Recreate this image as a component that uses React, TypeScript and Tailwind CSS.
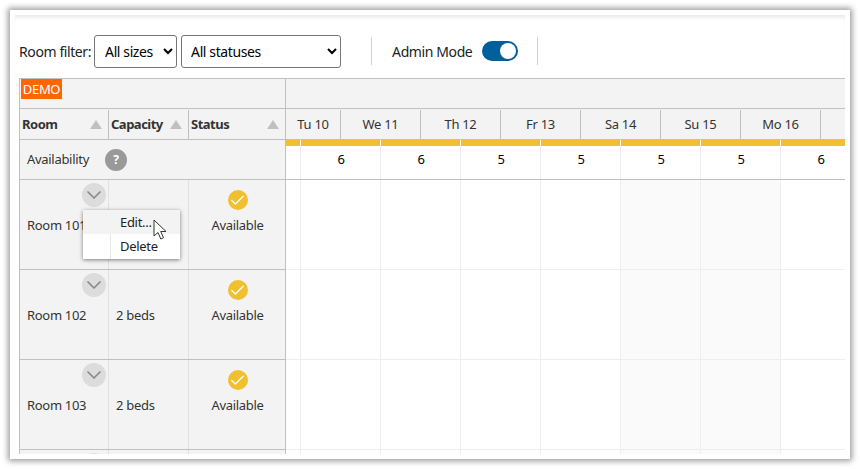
import { ChevronDown, Check } from 'lucide-react'

const days = ['Tu 10', 'We 11', 'Th 12', 'Fr 13', 'Sa 14', 'Su 15', 'Mo 16', '']
const counts = [6, 6, 5, 5, 5, 5, 6, null]
const rooms = ['Room 101', 'Room 102', 'Room 103', '']

function SortArrow() {
  return <span className="ml-auto h-0 w-0 border-x-[6px] border-b-[9px] border-x-transparent border-b-[#c0c0c0]" />
}

function RoomRow({ name }: { name: string }) {
  return (
    <div className="flex h-[90px] shrink-0 border-b border-[#c0c0c0]">
      <div className="relative flex w-[89px] shrink-0 items-center border-r border-[#e0e0e0] pl-[7px] pt-[3px]">
        {name}
        <div className="absolute left-[62px] top-[3px] flex h-6 w-6 items-center justify-center rounded-full bg-[#dcdcdc] text-[#8a8a8a]">
          <ChevronDown size={24} strokeWidth={1.75} />
        </div>
      </div>
      <div className="flex w-20 shrink-0 items-center border-r border-[#e0e0e0] pl-[7px] pt-[3px]">{name && '2 beds'}</div>
      {name && (
        <div className="flex flex-1 flex-col items-center pl-[1px] pt-[10px]">
          <div className="flex h-5 w-5 items-center justify-center rounded-full bg-[#f0c030] text-white">
            <Check size={17} strokeWidth={1.75} />
          </div>
          <div className="mt-[6px]">Available</div>
        </div>
      )}
    </div>
  )
}

function TimelineRow() {
  return (
    <div className="flex h-[90px] shrink-0 border-b border-[#eeeeee]">
      <div className="w-[15px] shrink-0 border-r border-[#eeeeee]" />
      {days.map((d, i) => (
        <div
          key={i}
          className={i === 4 || i === 5 ? 'w-20 shrink-0 border-r border-[#eeeeee] bg-[#fafafa]' : 'w-20 shrink-0 border-r border-[#eeeeee]'}
        />
      ))}
    </div>
  )
}

export default function App() {
  return (
    <div className="h-[469px] w-[860px] overflow-hidden bg-white p-[10px] pb-0 font-['Noto_Sans',sans-serif] text-[13px] tracking-[-0.3px] text-[#333333]">
      <div className="h-[449px] w-[840px] bg-white p-[5px] shadow-[0_0_6px_2px_rgba(0,0,0,0.4)]">
        <div className="flex h-[439px] flex-col overflow-hidden">
          {/* toolbar */}
          <div className="flex h-[63px] shrink-0 items-center pl-[4px] pt-[9px] text-[14px] tracking-[-0.4px] text-[#222222] shadow-[inset_0_4px_4px_-2px_rgba(0,0,0,0.1)]">
            <span>Room filter:</span>
            <select className="ml-[3px] h-[33px] w-[83px] rounded-[3px] border border-[#767676] bg-white pl-[6px] text-black">
              <option>All sizes</option>
            </select>
            <select className="ml-[4px] h-[33px] w-[160px] rounded-[3px] border border-[#767676] bg-white pl-[5px] text-black">
              <option>All statuses</option>
            </select>
            <div className="ml-[30px] h-7 w-px bg-[#d0d0d0]" />
            <span className="ml-[20px]">Admin Mode</span>
            <div className="ml-[10px] flex h-5 w-9 items-center justify-end rounded-full bg-[#00609c] pr-[2px]">
              <div className="h-4 w-4 rounded-full bg-white" />
            </div>
            <div className="ml-[19px] h-7 w-px bg-[#d0d0d0]" />
          </div>

          {/* scheduler */}
          <div className="relative ml-[4px] flex min-h-0 flex-1 border-t border-[#c0c0c0]">
            <div className="flex w-[267px] shrink-0 flex-col border-x border-[#c0c0c0] bg-[#f3f3f3]">
              <div className="h-[30px] shrink-0 border-b border-[#c0c0c0] pl-[1px]">
                <span className="inline-block h-5 w-[41px] bg-[#ff6600] text-center leading-5 text-white">DEMO</span>
              </div>
              <div className="flex h-[31px] shrink-0 border-b border-[#c0c0c0] pt-[1px] font-bold tracking-[-0.5px] text-[#333333]">
                <div className="flex w-[89px] shrink-0 items-center border-r border-[#c0c0c0] pl-[2px] pr-[6px]">Room<SortArrow /></div>
                <div className="flex w-20 shrink-0 items-center border-r border-[#c0c0c0] pl-[2px] pr-[6px]">Capacity<SortArrow /></div>
                <div className="flex flex-1 items-center pl-[2px] pr-[6px]">Status<SortArrow /></div>
              </div>
              <div className="flex h-10 shrink-0 items-center border-b border-[#c0c0c0] pl-[7px]">
                <span>Availability</span>
                <div className="ml-[16px] flex h-[22px] w-[22px] items-center justify-center rounded-full bg-[#999999] text-[12px] font-bold text-white">?</div>
              </div>
              {rooms.map((r, i) => <RoomRow key={i} name={r} />)}
            </div>

            <div className="flex min-w-0 flex-1 flex-col overflow-hidden">
              <div className="h-[30px] shrink-0 border-b border-[#c0c0c0] bg-[#f3f3f3]" />
              <div className="flex h-[31px] shrink-0 border-b border-[#c0c0c0] bg-[#f3f3f3] pt-[1px]">
                <div className="flex w-[55px] shrink-0 items-center justify-center border-r border-[#c0c0c0]">{days[0]}</div>
                {days.slice(1).map((d, i) => (
                  <div key={i} className="flex w-20 shrink-0 items-center justify-center border-r border-[#c0c0c0]">{d}</div>
                ))}
              </div>
              <div className="flex h-10 shrink-0 border-b border-[#c0c0c0] text-black">
                <div className="flex w-[15px] shrink-0 flex-col">
                  <div className="h-[6px] border-r border-white bg-[#f0c030]" />
                  <div className="flex-1 border-r border-[#eeeeee]" />
                </div>
                {counts.map((c, i) => (
                  <div key={i} className="flex w-20 shrink-0 flex-col">
                    <div className="h-[6px] border-r border-white bg-[#f0c030]" />
                    <div className="flex flex-1 items-center justify-center border-r border-[#eeeeee] pb-[5px] pl-[1px]">{c}</div>
                  </div>
                ))}
              </div>
              {rooms.map((r, i) => <TimelineRow key={i} />)}
            </div>

            {/* context menu */}
            <div className="absolute left-[64px] top-[131px] w-[97px] bg-white text-[#222222] shadow-[0_1px_4px_rgba(0,0,0,0.5)]">
              <div className="flex h-6 items-center bg-[#f3f3f3] pl-[37px] pt-[1px]">Edit...</div>
              <div className="flex h-[25px] items-center">
                <div className="h-full w-[28px] border-r border-[#e6e6e6]" />
                <span className="pl-[9px]">Delete</span>
              </div>
            </div>
            <svg className="absolute left-[134px] top-[140px]" width="14" height="22" viewBox="0 0 14 22">
              <path d="M1 1v16l4-3.5 2.8 6.5 2.7-1.2-2.8-6.3h5.3z" fill="#fff" stroke="#333" strokeWidth="1" strokeLinejoin="round" />
            </svg>
          </div>
        </div>
      </div>
    </div>
  )
}
